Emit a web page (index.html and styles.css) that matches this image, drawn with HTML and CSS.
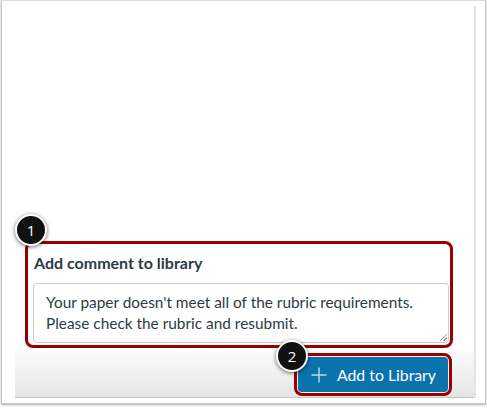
FILE: index.html
```html
<!DOCTYPE html>
<html>
<head>
<meta charset="utf-8">
<link rel="stylesheet" href="styles.css">
</head>
<body>
<div class="frame">
  <div class="panel">
    <div class="content">
      <div class="callout form-box">
        <span class="badge badge-1">1</span>
        <div class="label">Add comment to library</div>
        <div class="textarea">Your paper doesn't meet all of the rubric requirements. Please check the rubric and resubmit.<span class="grip"></span></div>
      </div>
    </div>
    <div class="footer">
      <div class="callout btn-box">
        <span class="badge badge-2">2</span>
        <button class="btn"><svg class="plus" width="16" height="16" viewBox="0 0 16 16"><path d="M8 0.5V15.5M0.5 8H15.5" stroke="currentColor" stroke-width="1.4" fill="none"/></svg>Add to Library</button>
      </div>
    </div>
  </div>
</div>
</body>
</html>
```
FILE: styles.css
```css
html, body { margin: 0; padding: 0; background: #fff; }
body { width: 487px; height: 408px; overflow: hidden; font-family: Lato, "Open Sans", sans-serif; }
.frame {
  margin-left: 1px;
  width: 485px;
  height: 404px;
  box-sizing: border-box;
  border: 1px solid #c6c6c6;
  border-top-color: #dcdcdc;
  box-shadow: 0 1px 2px rgba(0,0,0,0.35);
  padding: 5px 9px 5px 13px;
  display: flex;
}
.panel {
  flex: 1;
  display: flex;
  flex-direction: column;
  border-right: 2px solid #e4e4e4;
}
.content {
  flex: 1;
  display: flex;
  flex-direction: column;
  justify-content: flex-end;
  padding: 0 21px 4px 10px;
}
.callout {
  position: relative;
  border: 3px solid #990000;
  border-radius: 8px;
  box-sizing: border-box;
}
.form-box {
  background: #fff;
  padding: 7px 1px 2px 5px;
  height: 107px;
}
.label {
  font-weight: 700;
  font-size: 16px;
  color: #2d3b45;
  padding-left: 1px;
  height: 32px;
  line-height: 24px;
}
.textarea {
  position: relative;
  border: 1px solid #c7cdd1;
  border-radius: 4px;
  height: 60px;
  box-sizing: border-box;
  padding: 8px 12px;
  font-size: 15.4px;
  line-height: 21px;
  color: #2d3b45;
}
.grip {
  position: absolute;
  right: 1px;
  bottom: 1px;
  width: 7px;
  height: 7px;
  background: linear-gradient(135deg, transparent 45%, #999 45%, #999 55%, transparent 55%, transparent 70%, #999 70%, #999 80%, transparent 80%);
}
.badge {
  position: absolute;
  width: 28px;
  height: 28px;
  border-radius: 50%;
  background: #111;
  border: 2px solid #fff;
  box-shadow: 0 1px 4px rgba(0,0,0,0.6);
  color: #fff;
  font-size: 15px;
  line-height: 28px;
  text-align: center;
  font-family: "Open Sans", Lato, sans-serif;
}
.badge-1 { left: -13px; top: -30px; }
.badge-2 { left: -21px; top: -16px; }
.footer {
  height: 45px;
  background: linear-gradient(#fbfbfb, #e5e5e5);
  border-bottom: 1px solid #c4c4c4;
  display: flex;
  justify-content: flex-end;
  align-items: center;
  padding-right: 22px;
}
.btn-box {
  padding: 1px;
  background: #f0f0f0;
}
.btn {
  display: flex;
  align-items: center;
  gap: 10px;
  height: 35px;
  width: 150px;
  box-sizing: border-box;
  padding: 0 0 0 13px;
  background: #0a72ad;
  border: none;
  border-radius: 4px;
  color: #fff;
  font-family: Lato, sans-serif;
  font-size: 15.8px;
}
.plus { color: #b9d9ec; flex: none; }
```
